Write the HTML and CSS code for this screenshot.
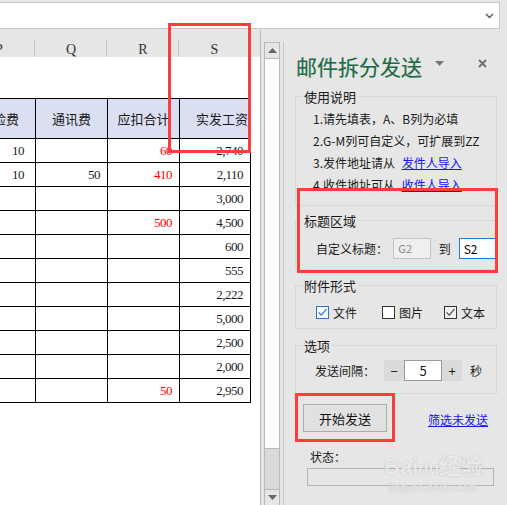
FILE: index.html
```html
<!DOCTYPE html>
<html lang="zh-CN">
<head>
    <meta charset="UTF-8">
    <title>邮件拆分发送</title>
    <link rel="stylesheet" href="styles.css">
</head>
<body>
    <div class="formula-bar">
        <svg class="chev" width="9" height="6" viewBox="0 0 9 6"><path d="M1 1l3.5 3.5L8 1" fill="none" stroke="#555" stroke-width="1.4"/></svg>
    </div>

    <div class="main">
        <div class="sheet">
            <div class="col-heads">
                <div class="col-head">P</div>
                <div class="col-head">Q</div>
                <div class="col-head">R</div>
                <div class="col-head">S</div>
            </div>
            <div class="grid">
                <div class="blank-row"></div>
                <table class="salary">
                    <colgroup>
                        <col class="c-p"><col class="c-q"><col class="c-r"><col class="c-s">
                    </colgroup>
                    <tr>
                        <th>保险费</th>
                        <th>通讯费</th>
                        <th>应扣合计</th>
                        <th class="th-pay">实发工资</th>
                    </tr>
                    <tr><td class="first">10</td><td></td><td class="red">60</td><td>2,740</td></tr>
                    <tr><td class="first">10</td><td>50</td><td class="red">410</td><td>2,110</td></tr>
                    <tr><td></td><td></td><td></td><td>3,000</td></tr>
                    <tr><td></td><td></td><td class="red">500</td><td>4,500</td></tr>
                    <tr><td></td><td></td><td></td><td>600</td></tr>
                    <tr><td></td><td></td><td></td><td>555</td></tr>
                    <tr><td></td><td></td><td></td><td>2,222</td></tr>
                    <tr><td></td><td></td><td></td><td>5,000</td></tr>
                    <tr><td></td><td></td><td></td><td>2,500</td></tr>
                    <tr><td></td><td></td><td></td><td>2,000</td></tr>
                    <tr><td></td><td></td><td class="red">50</td><td>2,950</td></tr>
                </table>
            </div>
        </div>

        <div class="scrollbar">
            <div class="sb-btn"><svg width="9" height="5" viewBox="0 0 9 5"><path d="M0 5L4.5 0L9 5z" fill="#666"/></svg></div>
            <div class="sb-thumb"></div>
            <div class="sb-track"></div>
            <div class="sb-btn"><svg width="9" height="5" viewBox="0 0 9 5"><path d="M0 0L9 0L4.5 5z" fill="#666"/></svg></div>
        </div>

        <aside class="panel">
            <div class="panel-head">
                <h1 class="panel-title">邮件拆分发送</h1>
                <svg class="tri" width="9" height="5" viewBox="0 0 9 5"><path d="M0 0L9 0L4.5 5z" fill="#777"/></svg>
                <svg class="close" width="9" height="9" viewBox="0 0 9 9"><path d="M1 1L8 8M8 1L1 8" stroke="#6e6e6e" stroke-width="1.8"/></svg>
            </div>

            <section class="group group-help">
                <div class="legend">使用说明</div>
                <ul class="help">
                    <li>1.请先填表，A、B列为必填</li>
                    <li>2.G-M列可自定义，可扩展到ZZ</li>
                    <li>3.发件地址请从 <a href="#">发件人导入</a></li>
                    <li>4.收件地址可从 <a href="#">收件人导入</a></li>
                </ul>
            </section>

            <section class="group group-title">
                <div class="legend">标题区域</div>
                <div class="row title-row">
                    <span class="lbl">自定义标题：</span>
                    <span class="box box-off">G2</span>
                    <span class="to">到</span>
                    <span class="box box-on">S2</span>
                </div>
            </section>

            <section class="group group-attach">
                <div class="legend">附件形式</div>
                <div class="row checks">
                    <label class="check check-file">
                        <svg width="13" height="13" viewBox="0 0 13 13"><rect x=".5" y=".5" width="12" height="12" fill="#fff" stroke="#1e78dc"/><path d="M2.6 6.4l2.6 2.7 5.3-5.9" fill="none" stroke="#1e78dc" stroke-width="1.2"/></svg>
                        文件
                    </label>
                    <label class="check check-pic">
                        <svg width="13" height="13" viewBox="0 0 13 13"><rect x=".5" y=".5" width="12" height="12" fill="#fff" stroke="#333"/></svg>
                        图片
                    </label>
                    <label class="check">
                        <svg width="13" height="13" viewBox="0 0 13 13"><rect x=".5" y=".5" width="12" height="12" fill="#f2f2f2" stroke="#333"/><path d="M2.6 6.4l2.6 2.7 5.3-5.9" fill="none" stroke="#444" stroke-width="1.2"/></svg>
                        文本
                    </label>
                </div>
            </section>

            <section class="group group-opts">
                <div class="legend">选项</div>
                <div class="row opts-row">
                    <span class="lbl">发送间隔：</span>
                    <div class="spin">
                        <span class="spin-btn">−</span>
                        <span class="spin-val">5</span>
                        <span class="spin-btn">+</span>
                    </div>
                    <span class="unit">秒</span>
                </div>
            </section>

            <div class="actions">
                <button class="btn-send">开始发送</button>
                <a href="#" class="filter-link">筛选未发送</a>
            </div>

            <div class="status-lbl">状态：</div>
            <div class="status-box"></div>
        </aside>
    </div>

    <!-- annotation boxes and watermark sit over the screenshot -->
    <div class="mark mark-col"></div>
    <div class="mark mark-title"></div>
    <div class="mark mark-send"></div>
    <div class="watermark">
        <div class="wm-main">Bai<span class="wm-du">du</span>经验</div>
        <div class="wm-sub">jingyan.baidu.com</div>
    </div>
</body>
</html>
```

FILE: styles.css
```css
body {
    margin: 0;
    width: 507px;
    height: 505px;
    overflow: hidden;
    position: relative;
    background-color: #e6e6e6;
    font-family: "Noto Sans CJK SC", "Microsoft YaHei", sans-serif;
    font-size: 12px;
    color: #1a1a1a;
}
.formula-bar {
    box-sizing: border-box;
    height: 27px;
    width: 501px;
    margin: 2px 0 0 -1px;
    background-color: #fff;
    border: 1px solid #c6c6c6;
    display: flex;
    align-items: center;
    justify-content: flex-end;
    padding-right: 5px;
}
.main {
    display: flex;
    margin-top: 1px;
    height: 475px;
}

/* sheet */
.sheet {
    width: 260px;
    border-right: 1px solid #b8b8b8;
    overflow: hidden;
    display: flex;
    flex-direction: column;
}
.col-heads {
    height: 27px;
    flex: none;
    display: grid;
    grid-template-columns: 72px 72px 72px 71px;
    margin-left: -37px;
}
.col-head {
    position: relative;
    text-align: center;
    line-height: 40px;
    height: 27px;
    font-family: "Liberation Serif", serif;
    font-size: 14px;
    color: #333;
}
.col-head::after {
    content: "";
    position: absolute;
    right: 0;
    bottom: 0;
    width: 1px;
    height: 17px;
    background-color: #c4c4c4;
}
.grid {
    flex: 1;
    background-color: #fff;
}
.blank-row {
    height: 41px;
}
.salary {
    border-collapse: collapse;
    table-layout: fixed;
    margin-left: -37px;
    width: 288px;
    font-family: "Liberation Serif", serif;
    font-size: 13px;
    letter-spacing: -0.5px;
}
.c-p, .c-q, .c-r { width: 72px; }
.c-s { width: 71px; }
.salary th, .salary td {
    border: 1px solid #000;
    padding: 0;
}
.salary th {
    height: 39px;
    background-color: #dae0f2;
    font-family: "Noto Sans CJK SC", sans-serif;
    font-weight: normal;
    font-size: 13px;
    letter-spacing: 0;
    text-align: center;
}
.salary .th-pay {
    padding-left: 14px;
}
.salary td {
    height: 23px;
    text-align: right;
    padding-right: 7px;
}
.salary td.first {
    padding-right: 11px;
}
.salary td.red {
    color: #f00;
}

/* scrollbar */
.scrollbar {
    box-sizing: border-box;
    width: 16px;
    margin: 12px 3px 0 3px;
    border: 1px solid #b9b9b9;
    border-bottom: none;
    display: flex;
    flex-direction: column;
}
.sb-btn {
    height: 15px;
    flex: none;
    display: flex;
    align-items: center;
    justify-content: center;
    background-color: #e6e6e6;
}
.sb-thumb {
    height: 389px;
    background-color: #fff;
    border-top: 1px solid #b9b9b9;
    border-bottom: 1px solid #b9b9b9;
}
.sb-track {
    flex: 1;
    background-color: #d9d9d9;
    border-bottom: 1px solid #b9b9b9;
}

/* task pane */
.panel {
    flex: 1;
    margin-top: 12px;
    border-left: 1px solid #c8c8c8;
    padding-left: 11px;
}
.panel-head {
    height: 50px;
    display: flex;
    align-items: center;
}
.panel-title {
    margin: 0 0 0 1px;
    font-size: 21px;
    font-weight: normal;
    color: #1d6b42;
    line-height: 30px;
    position: relative;
    top: -1px;
    -webkit-text-stroke: 0.2px #1d6b42;
}
.tri {
    margin-left: 13px;
    position: relative;
    top: -4px;
}
.close {
    margin-left: 34px;
    position: relative;
    top: -4px;
}
.group {
    box-sizing: border-box;
    width: 202px;
    border: 1px solid #d8d8d8;
}
.legend {
    display: table;
    margin: -9px 0 0 6px;
    padding: 0 2px;
    line-height: 17px;
    font-size: 13px;
    background-color: #e6e6e6;
}
.group-help {
    margin-top: 4px;
    height: 110px;
}
.help {
    list-style: none;
    margin: 3px 0 0 0;
    padding: 0 0 0 17px;
}
.help li {
    line-height: 22px;
}
.help a, .filter-link {
    color: #1414ff;
    text-decoration: underline;
    margin-left: 4px;
}
.group-title {
    margin-top: 14px;
    height: 50px;
}
.row {
    display: flex;
    align-items: center;
}
.title-row {
    margin-top: 9px;
    height: 21px;
    padding-left: 20px;
}
.lbl {
    width: 79px;
}
.box {
    box-sizing: border-box;
    width: 38px;
    height: 21px;
    line-height: 19px;
    padding-left: 4px;
    font-size: 11px;
}
.box-off {
    background-color: #efefef;
    border: 1px solid #c4c4c4;
    color: #8a8a8a;
}
.box-on {
    background-color: #fff;
    border: 1px solid #1f78d1;
    color: #000;
    font-size: 12px;
}
.to {
    margin: 0 8px;
}
.group-attach {
    margin-top: 15px;
    height: 44px;
}
.checks {
    margin-top: 12px;
    padding-left: 20px;
}
.check {
    display: flex;
    align-items: center;
    gap: 4px;
    line-height: 13px;
}
.check-file { width: 66px; }
.check-pic { width: 62px; }
.group-opts {
    margin-top: 16px;
    height: 49px;
}
.opts-row {
    margin-top: 6px;
    padding-left: 19px;
}
.opts-row .lbl {
    width: 69px;
}
.spin {
    display: flex;
    height: 21px;
}
.spin-btn {
    width: 20px;
    background-color: #dadada;
    text-align: center;
    line-height: 21px;
    font-size: 13px;
}
.spin-val {
    box-sizing: border-box;
    width: 38px;
    background-color: #fff;
    border: 1px solid #9a9a9a;
    text-align: center;
    line-height: 19px;
    font-size: 13px;
}
.unit {
    margin-left: 8px;
}
.actions {
    display: flex;
    align-items: center;
    margin-top: 10px;
    padding-left: 8px;
}
.btn-send {
    width: 84px;
    height: 28px;
    background-color: #e1e1e1;
    border: 1px solid #adadad;
    font-family: inherit;
    font-size: 13px;
    color: #111;
    padding: 0;
}
.filter-link {
    margin-left: 41px;
    margin-top: 2px;
}
.status-lbl {
    margin: 17px 0 0 15px;
    line-height: 16px;
}
.status-box {
    box-sizing: border-box;
    width: 187px;
    height: 18px;
    margin: 3px 0 0 12px;
    border: 1px solid #b4b4b4;
}

/* red annotation boxes */
.mark {
    position: absolute;
    box-sizing: border-box;
    border: 3px solid #fd3c3c;
}
.mark-col {
    left: 168px;
    top: 23px;
    width: 83px;
    height: 130px;
}
.mark-title {
    left: 297px;
    top: 188px;
    width: 201px;
    height: 85px;
}
.mark-send {
    left: 295px;
    top: 393px;
    width: 100px;
    height: 49px;
}
.watermark {
    position: absolute;
    left: 384px;
    top: 455px;
    color: rgba(255, 255, 255, 0.75);
    text-shadow: 0 0 1px rgba(120, 120, 120, 0.6);
    text-align: center;
}
.wm-main {
    font-family: "Liberation Sans", sans-serif;
    font-size: 22px;
    font-weight: bold;
    line-height: 24px;
}
.wm-du {
    font-size: 17px;
}
.wm-sub {
    font-family: "Liberation Sans", sans-serif;
    font-size: 11px;
    line-height: 12px;
}
```
